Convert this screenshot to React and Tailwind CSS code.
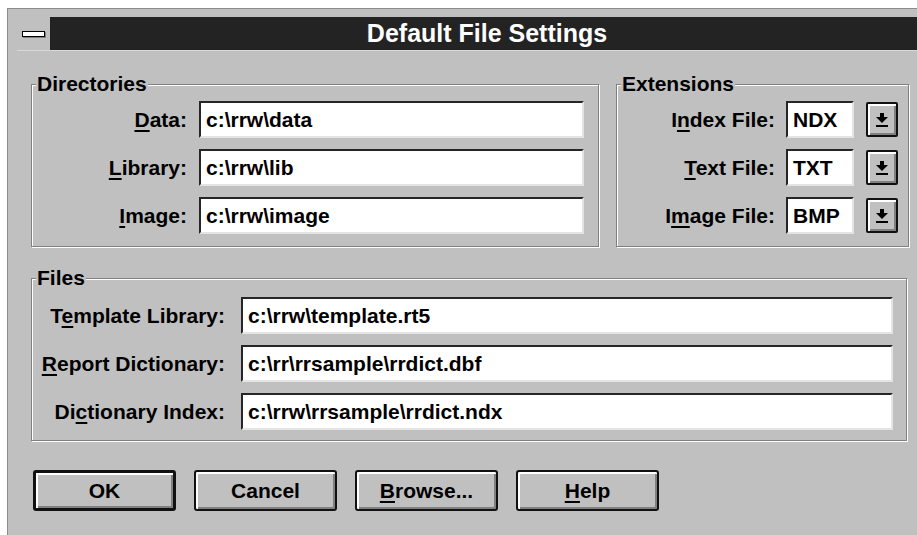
import React from 'react'

// Accelerator letter, underlined like a Win 3.x mnemonic
function Key({ children }) {
  return <span className="underline underline-offset-[3px] decoration-2">{children}</span>
}

function Group({ title, className = '', children }) {
  return (
    <fieldset className={`min-w-0 border border-[#808080] shadow-[inset_1px_1px_0_#fff,1px_1px_0_#fff] ${className}`}>
      <legend className="ml-[4px] px-[1px] bg-[#c0c0c0] leading-[24px]">{title}</legend>
      {children}
    </fieldset>
  )
}

function Field({ value, className = '' }) {
  return (
    <div className={`h-[37px] bg-white border-2 border-t-[#262626] border-l-[#262626] border-r-[#e4e4e4] border-b-[#e4e4e4] flex items-center px-[5px] whitespace-nowrap ${className}`}>
      {value}
    </div>
  )
}

function DropArrow() {
  return (
    <div className="w-[32px] h-[35px] border-2 border-[#111] rounded-[2px] bg-[#c0c0c0] shadow-[inset_2px_2px_0_#fff,inset_-2px_-2px_0_#808080] flex items-center justify-center">
      <svg width="14" height="16" viewBox="0 0 14 16">
        <rect x="5" y="1" width="4" height="4" fill="#000" />
        <polygon points="1,5 13,5 7,11" fill="#000" />
        <rect x="1" y="13" width="12" height="2" fill="#000" />
      </svg>
    </div>
  )
}

function Button({ children, isDefault }) {
  return (
    <button
      className={`w-[143px] h-[41px] rounded-[3px] border-[#111] bg-[#c0c0c0] shadow-[inset_2px_2px_0_#fff,inset_-2px_-2px_0_#808080] font-bold ${isDefault ? 'border-[3px]' : 'border-2'}`}
    >
      {children}
    </button>
  )
}

const dirs = [
  { label: <><Key>D</Key>ata:</>, value: 'c:\\rrw\\data' },
  { label: <><Key>L</Key>ibrary:</>, value: 'c:\\rrw\\lib' },
  { label: <><Key>I</Key>mage:</>, value: 'c:\\rrw\\image' },
]

const exts = [
  { label: <>I<Key>n</Key>dex File:</>, value: 'NDX' },
  { label: <><Key>T</Key>ext File:</>, value: 'TXT' },
  { label: <>I<Key>m</Key>age File:</>, value: 'BMP' },
]

const files = [
  { label: <>T<Key>e</Key>mplate Library:</>, value: 'c:\\rrw\\template.rt5' },
  { label: <><Key>R</Key>eport Dictionary:</>, value: 'c:\\rr\\rrsample\\rrdict.dbf' },
  { label: <>Di<Key>c</Key>tionary Index:</>, value: 'c:\\rrw\\rrsample\\rrdict.ndx' },
]

export default function App() {
  return (
    <div className="w-[917px] h-[535px] bg-white overflow-hidden pl-[7px] pt-[8px] font-['Liberation_Sans',Arial,sans-serif] font-bold text-[21px] text-black">
      <div className="w-[916px] h-[560px] bg-[#c0c0c0] border-l border-t border-[#8c8c8c]">
        {/* Title bar */}
        <div className="ml-[9px] mt-[8px] flex h-[34px] border-b border-[#d8d8d8]">
          <div className="w-[34px] h-full bg-[#c0c0c0] border-r border-[#222] flex items-center justify-center">
            <div className="w-[23px] h-[6px] bg-white border border-black shadow-[1px_1px_0_#808080]" />
          </div>
          <div className="flex-1 bg-[#232323] text-white text-[25px] flex items-center justify-center">
            Default File Settings
          </div>
        </div>

        {/* Dialog body */}
        <div className="pl-[23px] pt-[21px]">
          <div className="flex gap-[17px]">
            <Group title="Directories" className="w-[568px] pt-[5px] pb-[12px] pr-[14px]">
              <div className="flex flex-col gap-[11px]">
                {dirs.map((d, i) => (
                  <div key={i} className="flex items-center">
                    <span className="w-[155px] text-right whitespace-nowrap">{d.label}</span>
                    <Field value={d.value} className="ml-[12px] flex-1" />
                  </div>
                ))}
              </div>
            </Group>

            <Group title="Extensions" className="w-[293px] pt-[5px] pb-[12px]">
              <div className="flex flex-col gap-[11px]">
                {exts.map((e, i) => (
                  <div key={i} className="flex items-center">
                    <span className="w-[158px] text-right whitespace-nowrap">{e.label}</span>
                    <Field value={e.value} className="ml-[11px] w-[68px]" />
                    <div className="ml-[12px]"><DropArrow /></div>
                  </div>
                ))}
              </div>
            </Group>
          </div>

          <Group title="Files" className="w-[876px] mt-[19px] pt-[7px] pb-[10px] pr-[13px]">
            <div className="flex flex-col gap-[11px]">
              {files.map((f, i) => (
                <div key={i} className="flex items-center">
                  <span className="w-[193px] text-right whitespace-nowrap">{f.label}</span>
                  <Field value={f.value} className="ml-[16px] flex-1" />
                </div>
              ))}
            </div>
          </Group>

          <div className="flex gap-[18px] mt-[29px] pl-[2px]">
            <Button isDefault>OK</Button>
            <Button>Cancel</Button>
            <Button><Key>B</Key>rowse...</Button>
            <Button><Key>H</Key>elp</Button>
          </div>
        </div>
      </div>
    </div>
  )
}
